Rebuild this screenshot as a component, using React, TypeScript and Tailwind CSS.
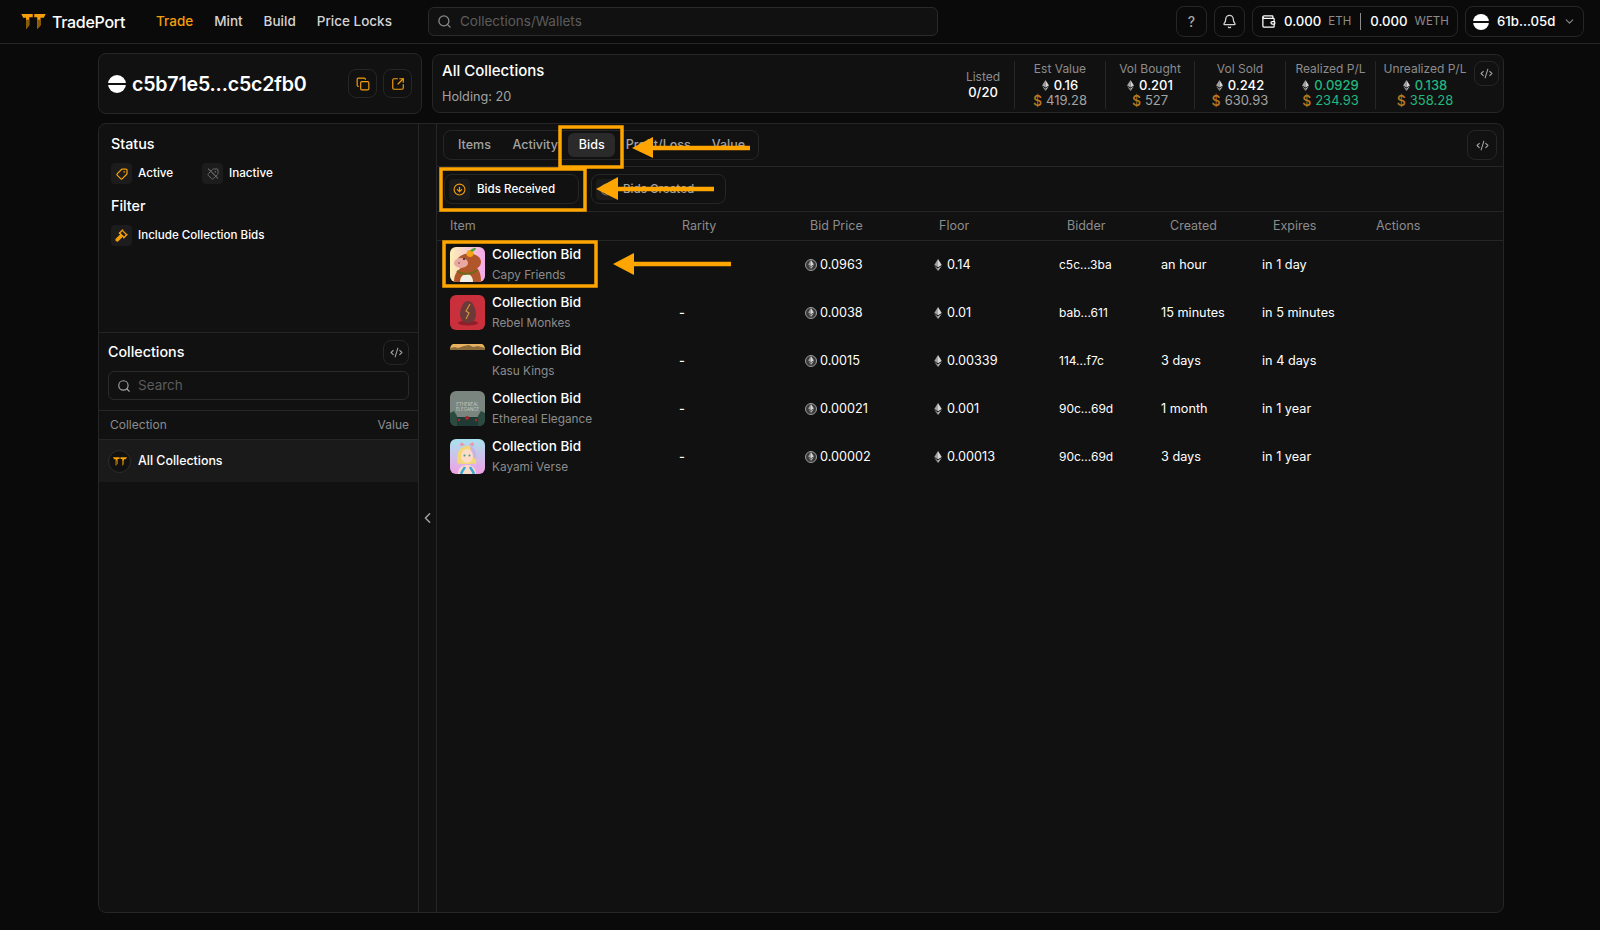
import { Bell, ChevronDown, ChevronLeft, CircleArrowDown, CircleArrowUp, CodeXml, Copy, Gavel, Search, SquareArrowOutUpRight, Tag, Wallet } from "lucide-react";
import type { ReactNode } from "react";

// ─── Small drawings ───────────────────────────────────────────────────────────

function Logo({ className }: { className: string }) {
  return (
    <svg viewBox="0 0 26 16" className={className} fill="#f59e0b">
      <path d="M0 0h12.2v3.5H8.5V12L5 16V4H2z" />
      <path d="M13.8 0H26l-2 4h-3.5v8L17 16V3.5h-3.2z" />
      <path d="M5 6h3.5v6L5 16zM17 6h3.5v6L17 16z" fill="#8a5a06" />
    </svg>
  );
}

function Eth({ className = "w-[8px] h-[13px]" }: { className?: string }) {
  return (
    <svg viewBox="0 0 10 16" className={className}>
      <path d="M5 0 0 8l5 3z" fill="#a3a3a3" />
      <path d="M5 0l5 8-5 3z" fill="#d4d4d4" />
      <path d="M0 9.2 5 16v-3.8z" fill="#8a8a8a" />
      <path d="M10 9.2 5 16v-3.8z" fill="#b5b5b5" />
    </svg>
  );
}

function EthCircle() {
  return (
    <span className="flex items-center justify-center w-[12px] h-[12px] rounded-full border border-[#9a9a9a] bg-[#3a3a3a]">
      <Eth className="w-[6px] h-[9px]" />
    </span>
  );
}

function Avatar({ className }: { className: string }) {
  return (
    <span className={`flex items-center rounded-full bg-white shrink-0 ${className}`}>
      <span className="h-[2px] w-full bg-[#111111]" />
    </span>
  );
}

function CapyThumb() {
  return (
    <svg viewBox="0 0 35 35" className="w-full h-full">
      <defs>
        <linearGradient id="capy" x1="0" x2="1">
          <stop offset="0" stopColor="#fdf0b5" />
          <stop offset="1" stopColor="#f4a8ea" />
        </linearGradient>
      </defs>
      <rect width="35" height="35" fill="url(#capy)" />
      <path d="M4 35c0-6 2-11 7-14h16c3 3 4 8 4 14z" fill="#b0562a" />
      <ellipse cx="19" cy="15" rx="12" ry="8.5" fill="#b0562a" />
      <ellipse cx="11" cy="16" rx="7" ry="5" fill="#e9a9a0" />
      <path d="M10 35c0-5 3-8 7-8s6 4 6 8z" fill="#f4efe4" />
      <path d="M7 24c5 4 14 4 20-1" stroke="#6d6a1c" strokeWidth="2" fill="none" />
      <circle cx="20" cy="6.5" r="3.5" fill="#f5a31a" />
      <path d="M20 4c2-3 4-3 6-3-1 3-3 4-6 3z" fill="#3fa83a" />
      <circle cx="14" cy="12" r="1" fill="#222" />
      <circle cx="9" cy="16" r="0.8" fill="#7a3a34" />
    </svg>
  );
}

function RebelThumb() {
  return (
    <svg viewBox="0 0 35 35" className="w-full h-full">
      <rect width="35" height="35" fill="#c9303b" />
      <ellipse cx="18" cy="28" rx="10" ry="2.5" fill="#8f1f29" />
      <path d="M18 6c5 0 8 8 8 13s-3 9-8 9-8-4-8-9 3-13 8-13z" fill="#6b3a38" />
      <path d="M20 9l-4 7 3 2-3 6" stroke="#c9973a" strokeWidth="1.2" fill="none" />
    </svg>
  );
}

function KasuThumb() {
  return (
    <svg viewBox="0 0 35 35" className="w-full h-full">
      <rect width="35" height="6" y="1" fill="#e8b25f" />
      <path d="M0 7V5l5-1 3 1 6-2 5-1 4 2 5-1 7 2v2z" fill="#8c6a3a" />
    </svg>
  );
}

function EtherealThumb() {
  return (
    <svg viewBox="0 0 35 35" className="w-full h-full">
      <rect width="35" height="35" fill="#79857e" />
      <rect width="35" height="9" y="26" fill="#1f3a34" />
      <path d="M0 35V22l4-2 3 5v10zM35 35V22l-4-2-3 5v10z" fill="#2b4a40" />
      <circle cx="17" cy="27" r="2" fill="#a3262a" />
      <circle cx="9" cy="29" r="1.3" fill="#a3262a" />
      <circle cx="26" cy="29" r="1.3" fill="#a3262a" />
      <text x="17.5" y="15" textAnchor="middle" fontSize="4.4" fill="#c3ccc6">ETHEREAL</text>
      <text x="17.5" y="20" textAnchor="middle" fontSize="4.4" fill="#c3ccc6">ELEGANCE</text>
    </svg>
  );
}

function KayamiThumb() {
  return (
    <svg viewBox="0 0 35 35" className="w-full h-full">
      <defs>
        <linearGradient id="kay" x1="0" x2="0" y1="0" y2="1">
          <stop offset="0" stopColor="#a9e2ee" />
          <stop offset="1" stopColor="#f2a0e6" />
        </linearGradient>
      </defs>
      <rect width="35" height="35" fill="url(#kay)" />
      <path d="M8 26c-2-8-1-18 9-19 9 0 10 10 9 19-2-2-3-2-4-1H12c-2-1-3-1-4 1z" fill="#f3d873" />
      <path d="M20 7c5 1 7 7 6 14l-4-4z" fill="#c7b4e8" />
      <ellipse cx="17" cy="17" rx="6" ry="7" fill="#fbdcc8" />
      <path d="M8 35c0-6 4-9 9-9s9 3 9 9z" fill="#fbdcc8" />
      <path d="M11 35c1-3 3-5 4-7M24 35c-1-3-3-5-4-7" stroke="#3ba6d9" strokeWidth="2.5" fill="none" />
      <path d="M10 7l1-4 4 3zM24 7l-1-4-4 3z" fill="#f08fa0" />
      <circle cx="14.5" cy="16.5" r="1" fill="#3b9a7a" />
      <circle cx="19.5" cy="16.5" r="1" fill="#3b9a7a" />
    </svg>
  );
}

// ─── Bits ─────────────────────────────────────────────────────────────────────

function IconBtn({ children, className }: { children: ReactNode; className: string }) {
  return (
    <button className={`flex items-center justify-center rounded-lg border border-[#262626] ${className}`}>
      {children}
    </button>
  );
}

function Stat({ label, eth, usd, green, width }: { label: string; eth: string; usd: string; green?: boolean; width: string }) {
  const tone = green ? "text-[#22b77f]" : "";
  return (
    <div className={`flex flex-col items-center h-[48px] border-l border-[#262626] ${width}`}>
      <span className="text-[12px] leading-[16px] text-[#8c8c8c]">{label}</span>
      <span className="flex items-center gap-[5px] text-[13px] leading-[16px] font-medium">
        <Eth className="w-[7px] h-[11px]" />
        <span className={tone || "text-white"}>{eth}</span>
      </span>
      <span className="flex items-center gap-[4px] text-[13px] leading-[15px]">
        <span className="text-[#b7791f] font-medium text-[14px]">$</span>
        <span className={tone || "text-[#a3a3a3]"}>{usd}</span>
      </span>
    </div>
  );
}

const ROWS = [
  { thumb: <CapyThumb />, name: "Capy Friends", rarity: "", bid: "0.0963", floor: "0.14", bidder: "c5c...3ba", created: "an hour", expires: "in 1 day" },
  { thumb: <RebelThumb />, name: "Rebel Monkes", rarity: "-", bid: "0.0038", floor: "0.01", bidder: "bab...611", created: "15 minutes", expires: "in 5 minutes" },
  { thumb: <KasuThumb />, name: "Kasu Kings", rarity: "-", bid: "0.0015", floor: "0.00339", bidder: "114...f7c", created: "3 days", expires: "in 4 days" },
  { thumb: <EtherealThumb />, name: "Ethereal Elegance", rarity: "-", bid: "0.00021", floor: "0.001", bidder: "90c...69d", created: "1 month", expires: "in 1 year" },
  { thumb: <KayamiThumb />, name: "Kayami Verse", rarity: "-", bid: "0.00002", floor: "0.00013", bidder: "90c...69d", created: "3 days", expires: "in 1 year" },
];

// ─── Page ─────────────────────────────────────────────────────────────────────

export default function App() {
  return (
    <div className="relative h-[930px] overflow-hidden flex flex-col bg-[#0a0a0a] text-white [font-family:Inter,sans-serif]">
      {/* Top bar */}
      <header className="flex items-center h-[44px] shrink-0 border-b border-[#262626] pl-[21px] pr-[16px]">
        <Logo className="w-[25px] h-[15px]" />
        <span className="ml-[6px] text-[16px] font-medium tracking-[-0.3px] w-[104px]">TradePort</span>
        <nav className="flex gap-[21px] text-[13.5px] font-medium text-[#d4d4d4]">
          <span className="text-[#f59e0b]">Trade</span>
          <span>Mint</span>
          <span>Build</span>
          <span>Price Locks</span>
        </nav>
        <div className="flex items-center gap-[8px] ml-[36px] w-[510px] h-[29px] px-[8px] rounded-md border border-[#2a2a2a] bg-[#111111]">
          <Search className="w-[15px] h-[15px] text-[#8c8c8c]" />
          <span className="text-[13.5px] text-[#5c5c5c]">Collections/Wallets</span>
        </div>
        <div className="ml-auto flex items-center gap-[7px]">
          <IconBtn className="w-[31px] h-[31px] text-[14px] font-medium text-[#a3a3a3]">?</IconBtn>
          <IconBtn className="w-[31px] h-[31px] text-[#d4d4d4]"><Bell className="w-[15px] h-[15px]" /></IconBtn>
          <div className="flex items-center w-[206px] h-[31px] pl-[8px] rounded-lg border border-[#262626] text-[13.2px] font-medium">
            <Wallet className="w-[15px] h-[15px] text-white shrink-0" />
            <span className="ml-[8px]">0.000</span>
            <span className="ml-[7px] text-[11.5px] font-normal text-[#8c8c8c]">ETH</span>
            <span className="mx-[9px] w-px h-[17px] bg-[#8c8c8c]" />
            <span>0.000</span>
            <span className="ml-[7px] text-[11.5px] font-normal text-[#8c8c8c]">WETH</span>
          </div>
          <div className="flex items-center w-[119px] h-[31px] pl-[7px] rounded-lg border border-[#262626] text-[13.2px] font-medium">
            <Avatar className="w-[16px] h-[16px]" />
            <span className="ml-[8px]">61b...05d</span>
            <ChevronDown className="ml-[8px] w-[13px] h-[13px] text-[#8c8c8c] shrink-0" />
          </div>
        </div>
      </header>

      {/* Wallet + totals */}
      <div className="flex gap-[10px] mt-[9px] ml-[98px] mr-[96px] h-[61px] shrink-0">
        <div className="flex items-center w-[324px] pl-[9px] pr-[9px] rounded-lg border border-[#262626] bg-[#111111]">
          <Avatar className="w-[18px] h-[18px]" />
          <span className="ml-[6px] pt-[2px] text-[19.6px] font-semibold tracking-[-0.2px]">c5b71e5...c5c2fb0</span>
          <div className="ml-auto flex gap-[6px]">
            <IconBtn className="w-[29px] h-[29px] text-[#f59e0b]"><Copy className="w-[14px] h-[14px]" /></IconBtn>
            <IconBtn className="w-[29px] h-[29px] text-[#f59e0b]"><SquareArrowOutUpRight className="w-[14px] h-[14px]" /></IconBtn>
          </div>
        </div>
        <div className="flex flex-1 items-start justify-between my-px pl-[9px] pr-[4px] pt-[5px] rounded-lg border border-[#262626] bg-[#111111]">
          <div className="flex flex-col pt-px">
            <span className="text-[15px] leading-[20px] font-medium">All Collections</span>
            <span className="mt-[7px] text-[12.7px] leading-[18px] text-[#a3a3a3]">Holding: 20</span>
          </div>
          <div className="flex items-start mt-px">
            <div className="flex flex-col items-center justify-center gap-[1px] w-[62px] h-[46px]">
              <span className="text-[12px] leading-[15px] text-[#8c8c8c]">Listed</span>
              <span className="text-[13px] leading-[15px] font-medium">0/20</span>
            </div>
            <Stat width="w-[91px]" label="Est Value" eth="0.16" usd="419.28" />
            <Stat width="w-[89px]" label="Vol Bought" eth="0.201" usd="527" />
            <Stat width="w-[91px]" label="Vol Sold" eth="0.242" usd="630.93" />
            <Stat width="w-[90px]" label="Realized P/L" eth="0.0929" usd="234.93" green />
            <Stat width="w-[99px]" label="Unrealized P/L" eth="0.138" usd="358.28" green />
            <IconBtn className="w-[25px] h-[25px] text-[#a3a3a3]"><CodeXml className="w-[13px] h-[13px]" /></IconBtn>
          </div>
        </div>
      </div>

      {/* Main panel */}
      <div className="flex flex-1 min-h-0 mt-[9px] mb-[17px] ml-[98px] mr-[96px] rounded-lg border border-[#262626] bg-[#111111]">
        {/* Sidebar */}
        <aside className="flex flex-col w-[320px] shrink-0 border-r border-[#262626]">
          <div className="h-[209px] shrink-0 pl-[12px] pt-[10px] border-b border-[#262626]">
            <h3 className="text-[14.3px] leading-[20px] font-medium">Status</h3>
            <div className="flex items-center mt-[9px] h-[21px] text-[11.7px] font-medium">
              <span className="flex items-center justify-center w-[21px] h-[21px] rounded bg-[#1c1c1c] text-[#f59e0b]"><Tag className="w-[12px] h-[12px] rotate-90" strokeWidth={2.5} /></span>
              <span className="ml-[6px] w-[64px]">Active</span>
              <span className="relative flex items-center justify-center w-[21px] h-[21px] rounded bg-[#1c1c1c] text-[#6b6b6b]">
                <Tag className="w-[12px] h-[12px] rotate-90" />
                <span className="absolute w-[14px] h-px bg-[#6b6b6b] rotate-45" />
              </span>
              <span className="ml-[6px]">Inactive</span>
            </div>
            <h3 className="mt-[12px] text-[14.3px] leading-[20px] font-medium">Filter</h3>
            <div className="flex items-center mt-[9px] h-[21px] text-[11.6px] font-medium">
              <span className="flex items-center justify-center w-[21px] h-[21px] rounded bg-[#1c1c1c] text-[#f59e0b]"><Gavel className="w-[13px] h-[13px]" fill="currentColor" strokeWidth={2.5} /></span>
              <span className="ml-[6px]">Include Collection Bids</span>
            </div>
          </div>
          <div className="h-[78px] shrink-0 px-[9px] border-b border-[#262626]">
            <div className="flex items-center justify-between h-[38px]">
              <h3 className="text-[14.3px] font-medium">Collections</h3>
              <IconBtn className="w-[26px] h-[25px] text-[#a3a3a3]"><CodeXml className="w-[13px] h-[13px]" /></IconBtn>
            </div>
            <div className="flex items-center gap-[7px] h-[29px] px-[8px] rounded-md border border-[#2a2a2a]">
              <Search className="w-[14px] h-[14px] text-[#a3a3a3]" />
              <span className="text-[13.5px] text-[#5c5c5c]">Search</span>
            </div>
          </div>
          <div className="flex items-center justify-between h-[29px] shrink-0 pl-[11px] pr-[9px] border-b border-[#262626] text-[12px] text-[#8c8c8c]">
            <span>Collection</span>
            <span>Value</span>
          </div>
          <div className="flex items-center h-[42px] shrink-0 pl-[9px] bg-[#1a1a1a]">
            <span className="flex items-center justify-center w-[23px] h-[23px] rounded-full border border-[#2e2e2e] bg-[#111111]">
              <Logo className="w-[14px] h-[9px]" />
            </span>
            <span className="ml-[7px] text-[12.4px] font-medium">All Collections</span>
          </div>
        </aside>

        {/* Collapse rail */}
        <div className="flex items-center justify-center w-[18px] shrink-0 border-r border-[#262626] text-[#a3a3a3]">
          <ChevronLeft className="w-[18px] h-[18px]" />
        </div>

        {/* Bids */}
        <section className="flex flex-col flex-1 min-w-0">
          <div className="flex items-center justify-between h-[43px] shrink-0 pl-[6px] pr-[6px] border-b border-[#262626]">
            <div className="flex items-center h-[30px] px-[3px] w-[316px] rounded-lg border border-[#262626] text-[12.5px] font-medium text-[#a3a3a3]">
              <span className="px-[11px] pt-px">Items</span>
              <span className="px-[10.5px] pt-px">Activity</span>
              <span className="flex items-center h-[24px] px-[10.5px] pt-px rounded-md bg-[#2a2a2a] text-white">Bids</span>
              <span className="px-[10.5px] pt-px">Profit/Loss</span>
              <span className="px-[10.5px] pt-px">Value</span>
            </div>
            <IconBtn className="w-[30px] h-[30px] text-[#a3a3a3]"><CodeXml className="w-[13px] h-[13px]" /></IconBtn>
          </div>

          <div className="flex items-center gap-[12px] h-[45px] shrink-0 pl-[7px] border-b border-[#262626] text-[11.6px] font-medium">
            <div className="flex items-center w-[135px] h-[30px] pl-[4px] rounded-lg border border-[#262626]">
              <span className="flex items-center justify-center w-[21px] h-[21px] rounded bg-[#1c1c1c] text-[#f59e0b]"><CircleArrowDown className="w-[13px] h-[13px]" /></span>
              <span className="ml-[7px] pt-px">Bids Received</span>
            </div>
            <div className="flex items-center w-[135px] h-[30px] pl-[4px] rounded-lg border border-[#262626] text-[#a3a3a3]">
              <span className="flex items-center justify-center w-[21px] h-[21px] rounded bg-[#1c1c1c] text-[#6b6b6b]"><CircleArrowUp className="w-[13px] h-[13px]" /></span>
              <span className="ml-[6px] pt-px">Bids Created</span>
            </div>
          </div>

          <div className="grid grid-cols-[232px_128px_129px_128px_103px_103px_103px_1fr] items-center h-[29px] shrink-0 pl-[13px] border-b border-[#262626] text-[12.5px] text-[#8c8c8c]">
            <span>Item</span>
            <span>Rarity</span>
            <span>Bid Price</span>
            <span>Floor</span>
            <span>Bidder</span>
            <span>Created</span>
            <span>Expires</span>
            <span>Actions</span>
          </div>

          {ROWS.map((r) => (
            <div key={r.name} className="grid grid-cols-[229px_126px_129px_125px_102px_101px_1fr] items-center h-[48px] shrink-0 pl-[13px] text-[12.7px]">
              <div className="flex items-center">
                <div className="w-[35px] h-[35px] rounded-md overflow-hidden shrink-0 mb-px">{r.thumb}</div>
                <div className="flex flex-col gap-px pb-[2px] ml-[7px]">
                  <span className="text-[13.5px] leading-[20px] font-medium">Collection Bid</span>
                  <span className="text-[11.8px] leading-[20px] text-[#8c8c8c]">{r.name}</span>
                </div>
              </div>
              <span className="font-medium">{r.rarity}</span>
              <span className="flex items-center gap-[3px]"><EthCircle />{r.bid}</span>
              <span className="flex items-center gap-[5px]"><Eth className="w-[8px] h-[12px]" />{r.floor}</span>
              <span className="text-[12px]">{r.bidder}</span>
              <span>{r.created}</span>
              <span>{r.expires}</span>
            </div>
          ))}
        </section>
      </div>

      {/* Tutorial annotations drawn over the page */}
      <svg viewBox="0 0 1600 930" className="absolute inset-0 w-[1600px] h-[930px] pointer-events-none" fill="none" stroke="#ffa500" strokeWidth="3.5">
        <rect x="560" y="127" width="62" height="40" />
        <rect x="441" y="169" width="144" height="41" />
        <rect x="444" y="242" width="152" height="44" />
        <path d="M750 148H650" strokeWidth="4.5" />
        <path d="M632 148l21-11v21z" fill="#ffa500" stroke="none" />
        <path d="M714 189H615" strokeWidth="4.5" />
        <path d="M596 189l22-12v23z" fill="#ffa500" stroke="none" />
        <path d="M731 264H632" strokeWidth="4.5" />
        <path d="M613 264l21-11v22z" fill="#ffa500" stroke="none" />
      </svg>
    </div>
  );
}
